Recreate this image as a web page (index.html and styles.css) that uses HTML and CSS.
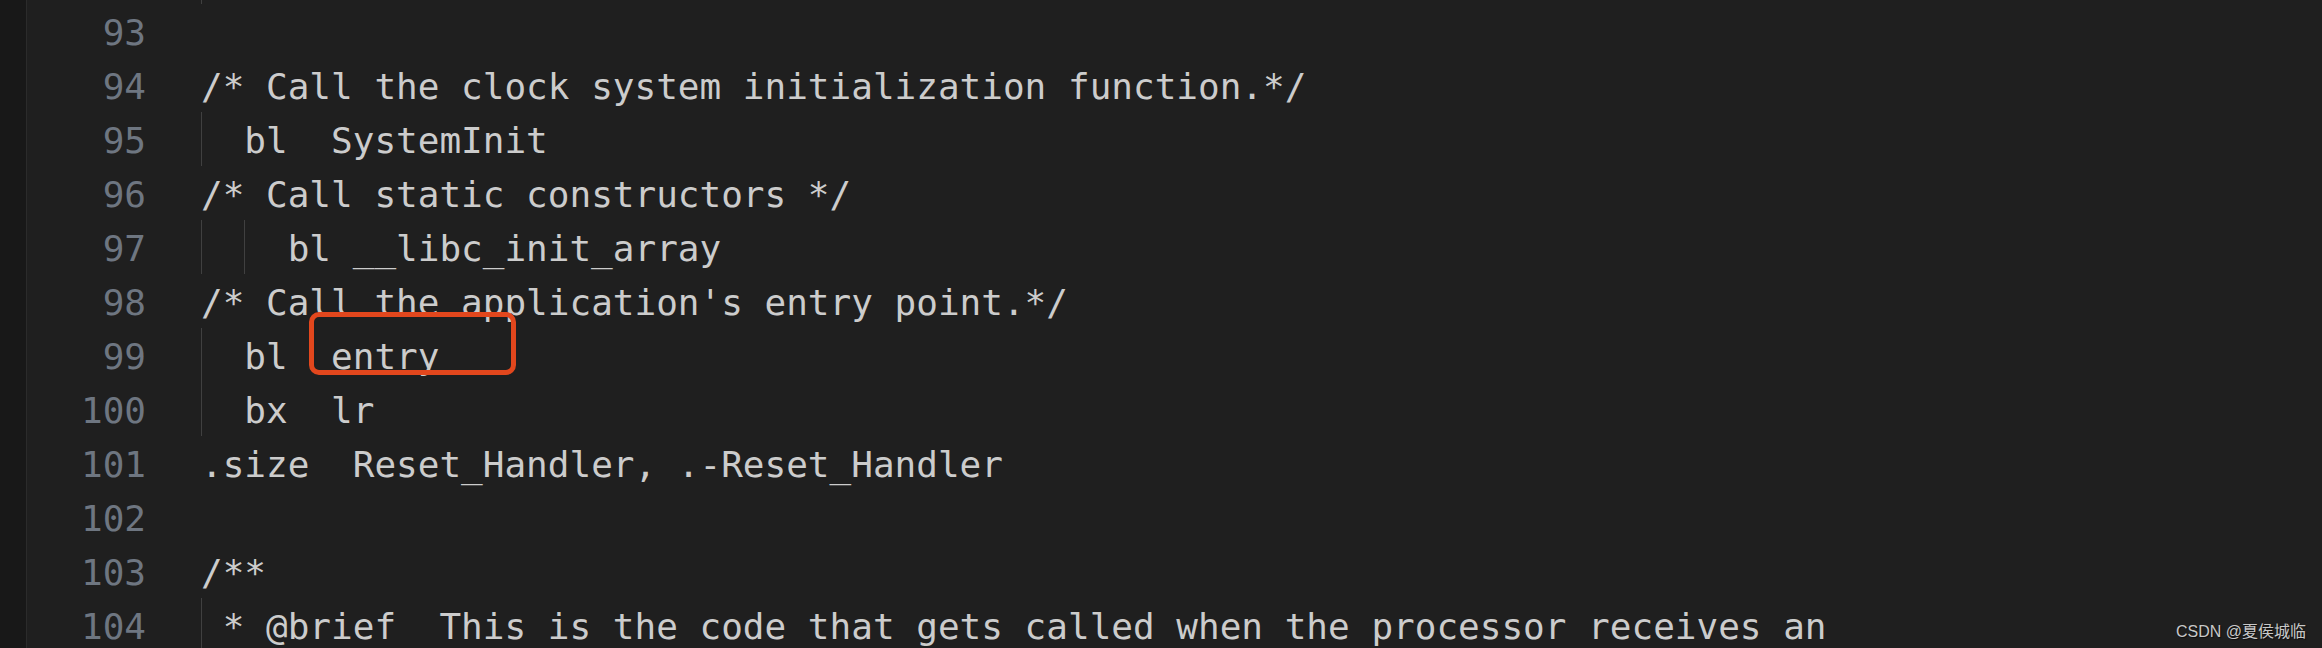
FILE: index.html
```html
<!DOCTYPE html>
<html lang="en">
<head>
<meta charset="utf-8">
<title>startup.s</title>
<link rel="stylesheet" href="styles.css">
</head>
<body>
<div class="window">
  <div class="activity"></div>
  <div class="editor">
    <div class="row partial"><span class="ln"></span><span class="code"><span class="ind"></span></span></div>
    <div class="row"><span class="ln">93</span><span class="code"></span></div>
    <div class="row"><span class="ln">94</span><span class="code">/* Call the clock system initialization function.*/</span></div>
    <div class="row"><span class="ln">95</span><span class="code"><span class="ind"></span>bl  SystemInit</span></div>
    <div class="row"><span class="ln">96</span><span class="code">/* Call static constructors */</span></div>
    <div class="row"><span class="ln">97</span><span class="code"><span class="ind"></span><span class="ind"></span>bl __libc_init_array</span></div>
    <div class="row"><span class="ln">98</span><span class="code">/* Call the application's entry point.*/</span></div>
    <div class="row"><span class="ln">99</span><span class="code"><span class="ind"></span>bl  entry</span></div>
    <div class="row"><span class="ln">100</span><span class="code"><span class="ind"></span>bx  lr</span></div>
    <div class="row"><span class="ln">101</span><span class="code">.size  Reset_Handler, .-Reset_Handler</span></div>
    <div class="row"><span class="ln">102</span><span class="code"></span></div>
    <div class="row"><span class="ln">103</span><span class="code">/**</span></div>
    <div class="row"><span class="ln">104</span><span class="code"><span class="ind half"></span>* @brief  This is the code that gets called when the processor receives an</span></div>
  </div>
  <div class="highlight-box"></div>
  <div class="watermark">CSDN @夏侯城临</div>
</div>
</body>
</html>
```

FILE: styles.css
```css
html, body {
  margin: 0;
  padding: 0;
  background: #1f1f1f;
  overflow: hidden;
}

.window {
  position: relative;
  display: flex;
  width: 2322px;
  height: 648px;
  background: #1f1f1f;
  overflow: hidden;
}

.activity {
  flex: 0 0 26px;
  background: #181818;
  border-right: 1px solid #2b2b2b;
}

.editor {
  flex: 1;
  display: flex;
  flex-direction: column;
  font-family: "DejaVu Sans Mono", "Liberation Mono", monospace;
  font-size: 36px;
}

.row {
  display: flex;
  box-sizing: border-box;
  height: 54px;
  padding-top: 3px;
  line-height: 51px;
  flex: 0 0 auto;
}

.row.partial {
  height: 4px;
  padding-top: 0;
  overflow: hidden;
}

.ln {
  flex: 0 0 119px;
  text-align: right;
  color: #6e7681;
  margin-right: 55px;
}

.code {
  color: #cccccc;
  white-space: pre;
}

.ind {
  display: inline-block;
  width: 2ch;
  height: 54px;
  margin-top: -3px;
  vertical-align: top;
  box-shadow: inset 1px 0 0 #404040;
}

.ind.half {
  width: 1ch;
}

.highlight-box {
  position: absolute;
  left: 309px;
  top: 312px;
  width: 197px;
  height: 53px;
  border: 5.5px solid #e2471d;
  border-radius: 10px;
}

.watermark {
  position: absolute;
  right: 16px;
  bottom: 6px;
  font-family: "Liberation Sans", "Noto Sans CJK SC", sans-serif;
  font-size: 16px;
  line-height: 20px;
  color: #c8c8c8;
  text-shadow: 1px 1px 1px rgba(0, 0, 0, 0.6);
}
```
